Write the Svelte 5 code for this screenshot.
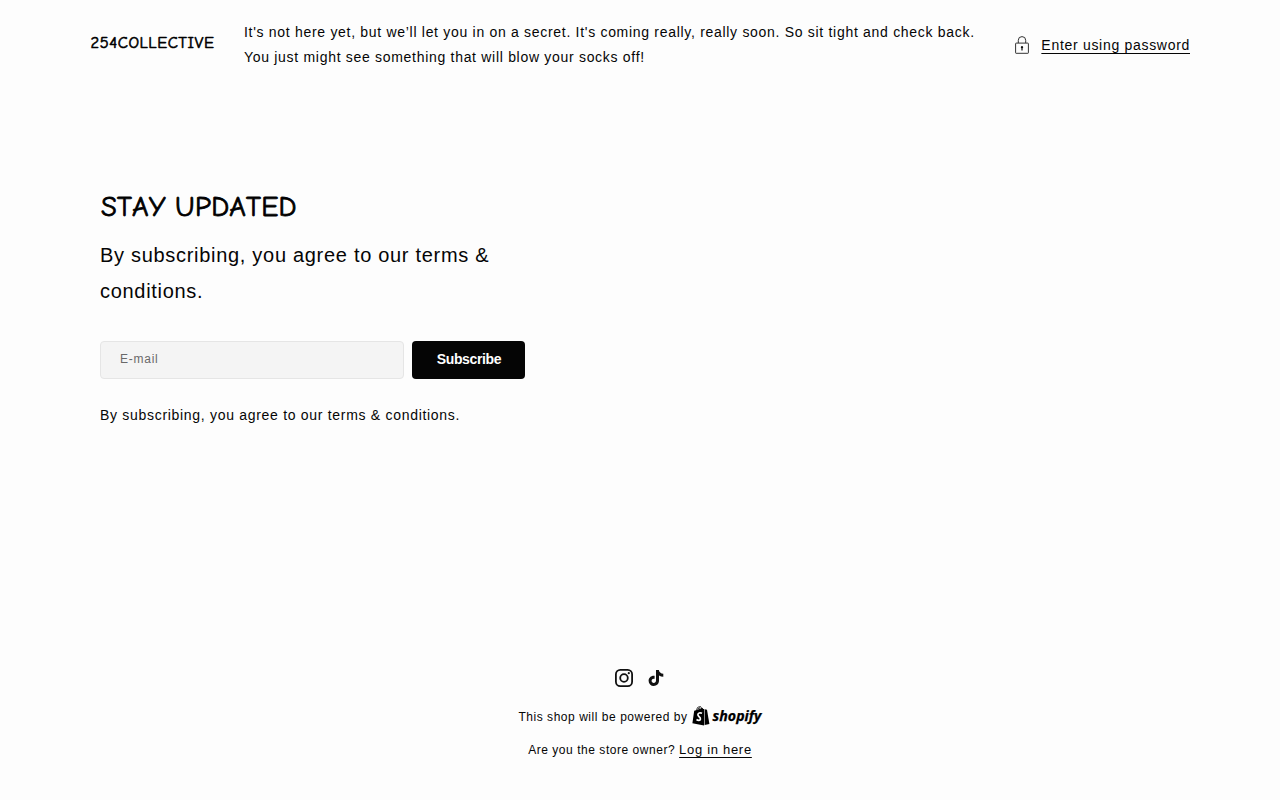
<script lang="ts">
  let email = $state('');

  function subscribe(event: SubmitEvent) {
    event.preventDefault();
    email = '';
  }
</script>

<div class="page">
  <header class="header">
    <h1 class="shop-name">254COLLECTIVE</h1>
    <p class="message">
      It's not here yet, but we’ll let you in on a secret. It's coming really, really soon. So sit
      tight and check back. You just might see something that will blow your socks off!
    </p>
    <div class="password">
      <svg class="icon-lock" viewBox="0 0 16 18" fill="none" aria-hidden="true">
        <rect x="1.6" y="7.1" width="12.8" height="10.2" rx="0.5" stroke="#333" />
        <path d="M4.3 7V4.3a3.7 3.7 0 0 1 7.4 0V7" stroke="#333" />
        <path d="M8 10a1.25 1.25 0 0 1 .6 2.3v2.2H7.4v-2.2A1.25 1.25 0 0 1 8 10z" fill="#111" />
      </svg>
      <a class="link" href="#password">Enter using password</a>
    </div>
  </header>

  <main class="main">
    <h2 class="heading">STAY UPDATED</h2>
    <p class="lead">By subscribing, you agree to our terms &amp; conditions.</p>
    <form class="form" onsubmit={subscribe}>
      <input type="email" class="email" placeholder="E-mail" aria-label="E-mail" bind:value={email} />
      <button class="submit" type="submit">Subscribe</button>
    </form>
    <p class="caption">By subscribing, you agree to our terms &amp; conditions.</p>
  </main>

  <footer class="footer">
    <div class="social">
      <a href="#instagram" aria-label="Instagram">
        <svg viewBox="0 0 18 18" aria-hidden="true">
          <rect x="0.9" y="0.9" width="16.2" height="16.2" rx="4.4" fill="none" stroke="#111" stroke-width="1.8" />
          <circle cx="9" cy="9" r="3.8" fill="none" stroke="#111" stroke-width="1.8" />
          <circle cx="13.8" cy="4.2" r="1.1" fill="#111" />
        </svg>
      </a>
      <a href="#tiktok" aria-label="TikTok">
        <svg viewBox="0 0 18 18" aria-hidden="true">
          <path
            d="M9 .9h2.9a4.1 4.1 0 0 0 1.3 2.7 4.7 4.7 0 0 0 3.1 1.2v3a7.9 7.9 0 0 1-4.3-1.3v5.3c0 3-2.3 5.2-5.3 5.2a5.2 5.2 0 0 1-5.1-5.2c0-3.2 2.8-5.5 6-5v3c-1.7-.4-3 .6-3 2 0 1.3 1 2.2 2.1 2.2 1.4 0 2.3-1 2.3-2.4z"
            fill="#111"
          />
        </svg>
      </a>
    </div>
    <p class="powered">
      <span>This shop will be powered by</span>
      <svg class="shopify" viewBox="0 0 70 20" aria-hidden="true">
        <path d="M2.2 4.8 4 4.2C4.7 1.6 6.2.2 7.8.2c1 0 1.5.6 1.8 1.6l1 .1.6 1 .9.1v16.5L.4 17.2z" />
        <path d="M12.6 3.2 15 3.8 17.4 18 12.6 19.1z" />
        <path
          d="M4.9 4.1C5.5 2.2 6.5 1 7.6 1M6.6 3.6C7.1 2.2 7.8 1.4 8.8 1.6M8.1 1.1c.5.6.6 1.2.6 2"
          fill="none"
          stroke="#fdfdfd"
          stroke-width="0.65"
        />
        <path
          d="M10 7.3C8.1 6.4 5.9 6.9 5.9 8.8c0 1.9 2.8 2.1 2.5 4.3-.2 1.6-2.3 1.5-3.9.4"
          fill="none"
          stroke="#fdfdfd"
          stroke-width="1.7"
        />
        <text x="20.6" y="15" textLength="48.8" lengthAdjust="spacingAndGlyphs">shopify</text>
      </svg>
    </p>
    <p class="owner">Are you the store owner? <a class="link" href="#login">Log in here</a></p>
  </footer>
</div>

<style>
  :global(body) {
    margin: 0;
    background: #fdfdfd;
  }

  .page {
    display: flex;
    flex-direction: column;
    min-height: 800px;
    box-sizing: border-box;
    padding-bottom: 37px;
    color: #050505;
    font-family: 'Liberation Sans', Arial, sans-serif;
    font-size: 14px;
    letter-spacing: 0.7px;
  }

  h1,
  h2,
  p {
    margin: 0;
    font-weight: 400;
  }

  .header {
    display: flex;
    align-items: center;
    height: 90px;
    padding: 0 90px;
  }

  .shop-name,
  .heading {
    font-family: 'Comic Sans MS', 'Comic Neue', cursive;
    font-kerning: none;
    color: #000;
  }

  .shop-name {
    width: 154px;
    flex-shrink: 0;
    box-sizing: border-box;
    padding: 0 0 4px 0.5px;
    font-size: 16.5px;
    line-height: 1.3;
    letter-spacing: 0.55px;
    -webkit-text-stroke: 0.6px #000;
  }

  .message {
    width: 740px;
    line-height: 25.2px;
    letter-spacing: 0.7px;
  }

  .password {
    display: flex;
    align-items: center;
    margin-left: auto;
    gap: 11px;
    white-space: nowrap;
  }

  .icon-lock {
    width: 16px;
    height: 18px;
  }

  .link {
    color: inherit;
    text-decoration: underline;
    text-underline-offset: 3px;
  }

  .main {
    width: 425px;
    padding: 99px 0 0 100px;
  }

  .heading {
    padding-left: 1px;
    font-size: 28.5px;
    line-height: 36px;
    letter-spacing: 0.2px;
    word-spacing: -0.5px;
    -webkit-text-stroke: 0.8px #000;
  }

  .lead {
    margin-top: 12px;
    font-size: 20px;
    line-height: 36px;
  }

  .form {
    display: flex;
    gap: 8px;
    margin-top: 32px;
  }

  .email {
    flex: 1;
    min-width: 0;
    height: 38px;
    box-sizing: border-box;
    padding: 0 19px 2px;
    border: 1px solid #e5e5e5;
    border-radius: 4px;
    background: #f4f4f4;
    color: inherit;
    font-family: inherit;
    font-size: 12px;
    letter-spacing: 0.75px;
  }

  .email::placeholder {
    color: #696969;
  }

  .submit {
    width: 113px;
    height: 38px;
    padding: 0 0 2px 1px;
    border: 0;
    border-radius: 4px;
    background: #050505;
    color: #fff;
    font-family: inherit;
    font-size: 14px;
    font-weight: 700;
    letter-spacing: -0.35px;
  }

  .caption {
    margin-top: 24px;
    line-height: 25px;
  }

  .footer {
    display: flex;
    flex-direction: column;
    align-items: center;
    margin-top: auto;
    font-size: 12px;
    letter-spacing: 0.54px;
  }

  .social {
    display: flex;
    gap: 14px;
    margin-bottom: 17px;
  }

  .social a,
  .social svg {
    display: block;
    width: 18px;
    height: 18px;
  }

  .powered {
    display: flex;
    align-items: center;
    gap: 4px;
    height: 24px;
  }

  .powered span {
    padding-top: 1px;
  }

  .shopify {
    width: 70px;
    height: 20px;
    overflow: visible;
    fill: #000;
  }

  .shopify text {
    font-family: 'Open Sans', sans-serif;
    font-size: 14px;
    font-style: italic;
    font-weight: 700;
    letter-spacing: 0;
    stroke: #000;
    stroke-width: 0.25px;
  }

  .owner {
    margin-top: 9px;
    line-height: 26px;
  }

  .owner .link {
    font-size: 13px;
    letter-spacing: 0.7px;
  }
</style>
